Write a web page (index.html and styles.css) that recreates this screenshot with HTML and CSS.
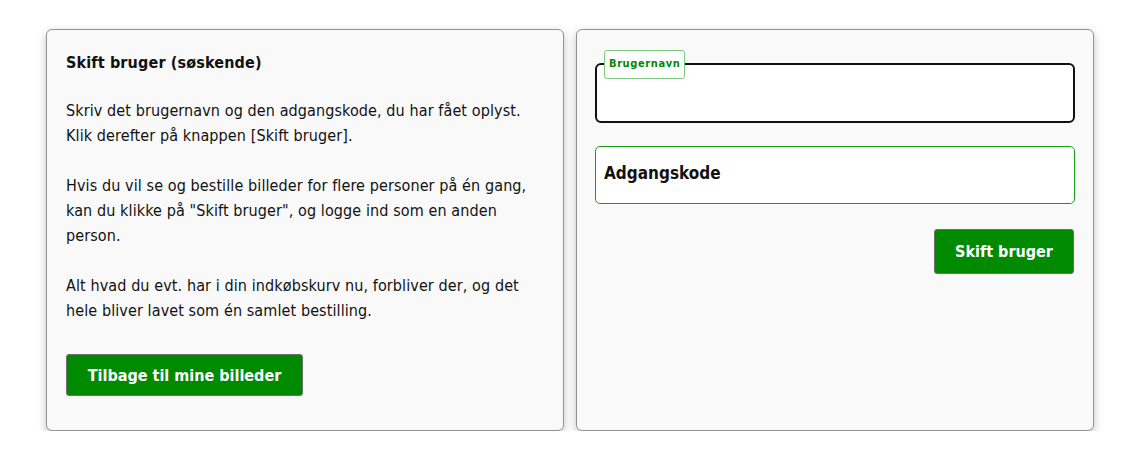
FILE: index.html
```html
<!DOCTYPE html>
<html lang="da">
<head>
    <meta charset="UTF-8">
    <meta name="viewport" content="width=device-width, initial-scale=1.0">
    <title>Skift bruger</title>
    <link rel="stylesheet" href="styles.css">
</head>
<body>
    <div class="page">
        <div class="card info">
            <h2>Skift bruger (søskende)</h2>
            <p>Skriv det brugernavn og den adgangskode, du har fået oplyst.<br>Klik derefter på knappen [Skift bruger].</p>
            <p>Hvis du vil se og bestille billeder for flere personer på én gang, kan du klikke på "Skift bruger", og logge ind som en anden person.</p>
            <p>Alt hvad du evt. har i din indkøbskurv nu, forbliver der, og det hele bliver lavet som én samlet bestilling.</p>
            <button class="btn back">Tilbage til mine billeder</button>
        </div>

        <div class="card login">
            <div class="field active">
                <label for="username">Brugernavn</label>
                <input type="text" id="username">
            </div>
            <div class="field">
                <input type="password" id="password" placeholder="Adgangskode">
            </div>
            <div class="actions">
                <button class="btn switch">Skift bruger</button>
            </div>
        </div>
    </div>
</body>
</html>
```

FILE: styles.css
```css
body {
    margin: 0;
    background: #fff;
    font-family: "DejaVu Sans Condensed", "DejaVu Sans", sans-serif;
    color: #111;
}
.page {
    display: grid;
    grid-template-columns: 518px 518px;
    gap: 12px;
    padding: 29px 0 0 46px;
}
.card {
    box-sizing: border-box;
    height: 402px;
    background: #f9f9f9;
    border: 1px solid #949494;
    border-radius: 6px;
    box-shadow: 0 3px 8px rgba(0, 0, 0, 0.25);
}
.info {
    padding: 20px 19px;
}
.info h2 {
    margin: 0 0 23px;
    font-size: 16px;
    line-height: 25px;
    font-weight: bold;
    letter-spacing: 0.15px;
}
.info p {
    margin: 0 0 25px;
    font-size: 16px;
    line-height: 25px;
    letter-spacing: 0.1px;
}
.btn {
    font-family: inherit;
    background: #008a00;
    color: #fff;
    font-weight: bold;
    font-size: 16px;
    border: 1px solid #6f6f6f;
    border-radius: 3px;
    cursor: pointer;
}
.back {
    margin-top: 6px;
    width: 237px;
    height: 42px;
}
.login {
    padding: 33px 19px 0 18px;
}
.field {
    position: relative;
    margin-bottom: 23px;
}
.field input {
    box-sizing: border-box;
    display: block;
    width: 480px;
    height: 58px;
    padding: 0 8px 4px;
    background: #fff;
    border: 1px solid #1a9a1a;
    border-radius: 5px;
    font-family: inherit;
    font-size: 17px;
    font-weight: bold;
    color: #111;
    outline: none;
}
.field input::placeholder {
    color: #111;
}
.field.active input {
    height: 60px;
    border: 2px solid #111;
    border-radius: 6px;
}
.field label {
    position: absolute;
    left: 9px;
    top: -13px;
    padding: 0 4px;
    height: 27px;
    line-height: 25px;
    background: #fff;
    border: 1px solid #7fce7f;
    border-radius: 3px;
    color: #008a00;
    font-size: 11px;
    font-weight: bold;
    letter-spacing: 0.6px;
}
.actions {
    display: flex;
    justify-content: flex-end;
    padding-top: 2px;
}
.switch {
    width: 140px;
    height: 45px;
}
```
